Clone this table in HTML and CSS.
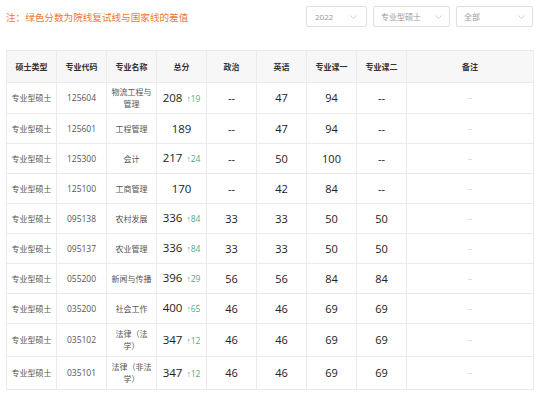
FILE: index.html
```html
<!DOCTYPE html>
<html lang="zh-CN">
<head>
  <meta charset="UTF-8">
  <title>复试分数线</title>
  <link rel="stylesheet" href="styles.css">
</head>
<body>
  <div class="page">
    <div class="toolbar">
      <p class="note">注：绿色分数为院线复试线与国家线的差值</p>
      <div class="filters">
        <div class="select select-year">
          <span>2022</span>
          <svg class="chevron" width="7" height="4" viewBox="0 0 7 4"><polyline points="0.5,0.5 3.5,3.5 6.5,0.5"/></svg>
        </div>
        <div class="select">
          <span>专业型硕士</span>
          <svg class="chevron" width="7" height="4" viewBox="0 0 7 4"><polyline points="0.5,0.5 3.5,3.5 6.5,0.5"/></svg>
        </div>
        <div class="select">
          <span>全部</span>
          <svg class="chevron" width="7" height="4" viewBox="0 0 7 4"><polyline points="0.5,0.5 3.5,3.5 6.5,0.5"/></svg>
        </div>
      </div>
    </div>

    <table class="scores">
      <colgroup>
        <col class="col-narrow"><col class="col-narrow"><col class="col-narrow"><col class="col-narrow">
        <col class="col-narrow"><col class="col-narrow"><col class="col-narrow"><col class="col-narrow">
        <col>
      </colgroup>
      <thead>
        <tr>
          <th>硕士类型</th>
          <th>专业代码</th>
          <th>专业名称</th>
          <th>总分</th>
          <th>政治</th>
          <th>英语</th>
          <th>专业课一</th>
          <th>专业课二</th>
          <th>备注</th>
        </tr>
      </thead>
      <tbody>
        <tr>
          <td class="muted">专业型硕士</td><td class="muted code">125604</td><td class="muted name">物流工程与管理</td>
          <td class="total">208<span class="diff"><span class="arrow">↑</span>19</span></td>
          <td>--</td><td>47</td><td>94</td><td>--</td><td class="remark">--</td>
        </tr>
        <tr>
          <td class="muted">专业型硕士</td><td class="muted code">125601</td><td class="muted">工程管理</td>
          <td class="total">189</td>
          <td>--</td><td>47</td><td>94</td><td>--</td><td class="remark">--</td>
        </tr>
        <tr>
          <td class="muted">专业型硕士</td><td class="muted code">125300</td><td class="muted">会计</td>
          <td class="total">217<span class="diff"><span class="arrow">↑</span>24</span></td>
          <td>--</td><td>50</td><td>100</td><td>--</td><td class="remark">--</td>
        </tr>
        <tr>
          <td class="muted">专业型硕士</td><td class="muted code">125100</td><td class="muted">工商管理</td>
          <td class="total">170</td>
          <td>--</td><td>42</td><td>84</td><td>--</td><td class="remark">--</td>
        </tr>
        <tr>
          <td class="muted">专业型硕士</td><td class="muted code">095138</td><td class="muted">农村发展</td>
          <td class="total">336<span class="diff"><span class="arrow">↑</span>84</span></td>
          <td>33</td><td>33</td><td>50</td><td>50</td><td class="remark">--</td>
        </tr>
        <tr>
          <td class="muted">专业型硕士</td><td class="muted code">095137</td><td class="muted">农业管理</td>
          <td class="total">336<span class="diff"><span class="arrow">↑</span>84</span></td>
          <td>33</td><td>33</td><td>50</td><td>50</td><td class="remark">--</td>
        </tr>
        <tr>
          <td class="muted">专业型硕士</td><td class="muted code">055200</td><td class="muted">新闻与传播</td>
          <td class="total">396<span class="diff"><span class="arrow">↑</span>29</span></td>
          <td>56</td><td>56</td><td>84</td><td>84</td><td class="remark">--</td>
        </tr>
        <tr>
          <td class="muted">专业型硕士</td><td class="muted code">035200</td><td class="muted">社会工作</td>
          <td class="total">400<span class="diff"><span class="arrow">↑</span>65</span></td>
          <td>46</td><td>46</td><td>69</td><td>69</td><td class="remark">--</td>
        </tr>
        <tr>
          <td class="muted">专业型硕士</td><td class="muted code">035102</td><td class="muted">法律（法学）</td>
          <td class="total">347<span class="diff"><span class="arrow">↑</span>12</span></td>
          <td>46</td><td>46</td><td>69</td><td>69</td><td class="remark">--</td>
        </tr>
        <tr>
          <td class="muted">专业型硕士</td><td class="muted code">035101</td><td class="muted">法律（非法学）</td>
          <td class="total">347<span class="diff"><span class="arrow">↑</span>12</span></td>
          <td>46</td><td>46</td><td>69</td><td>69</td><td class="remark">--</td>
        </tr>
      </tbody>
    </table>
  </div>
</body>
</html>
```

FILE: styles.css
```css
body {
  margin: 0;
  font-family: "Open Sans", "Noto Sans CJK SC", sans-serif;
  background: #fff;
  color: #333;
}
.page {
  padding: 6px 6px 0;
}
/* Top line: note on the left, filters on the right */
.toolbar {
  display: flex;
  align-items: center;
  justify-content: space-between;
  height: 21px;
  margin-bottom: 23px;
}
.note {
  margin: 0;
  font-size: 9.6px;
  color: #f5772e;
}
.filters {
  display: flex;
  gap: 6px;
  margin-right: 1px;
}
.select {
  display: flex;
  align-items: center;
  justify-content: space-between;
  box-sizing: border-box;
  width: 77px;
  height: 21px;
  padding: 0 7px 0 7px;
  border: 1px solid #dcdfe6;
  border-radius: 2px;
  font-size: 8px;
  color: #999;
}
.select-year {
  width: 61px;
  padding-left: 8px;
  padding-right: 9px;
}
.chevron polyline {
  fill: none;
  stroke: #c0c4cc;
  stroke-width: 0.8;
}
/* Score table */
.scores {
  width: 528px;
  table-layout: fixed;
  border-collapse: collapse;
}
.col-narrow {
  width: 50px;
}
.scores th,
.scores td {
  border: 1px solid #ebebeb;
  padding: 4px 3px;
  text-align: center;
}
.scores th {
  height: 32px;
  box-sizing: border-box;
  background: #f7f7f7;
  font-size: 8px;
  font-weight: bold;
  color: #333;
}
.scores td {
  height: 30px;
  box-sizing: border-box;
  font-size: 11px;
  line-height: 12px;
  color: #222;
}
.scores td.muted {
  font-size: 8px;
  color: #555;
}
.scores td.code {
  font-size: 8.5px;
}
.scores td.name {
  padding-top: 3px;
  padding-bottom: 3px;
}
.scores td.total {
  font-size: 11.5px;
  white-space: nowrap;
}
.scores td.remark {
  font-size: 7px;
  color: #bbb;
}
.diff {
  margin-left: 4px;
  font-size: 8.5px;
  color: #4fae7f;
}
.arrow {
  font-family: "Liberation Sans", sans-serif;
}
```
